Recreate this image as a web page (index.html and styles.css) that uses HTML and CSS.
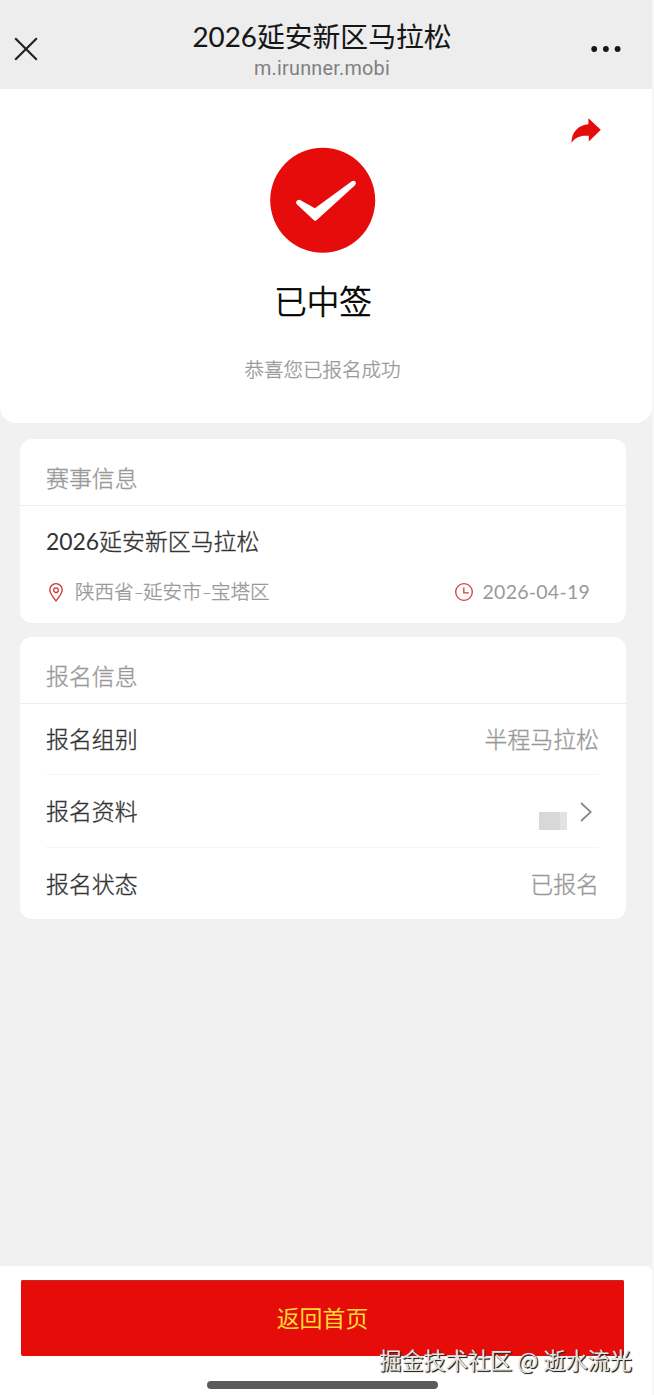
FILE: index.html
```html
<!DOCTYPE html>
<html lang="zh-CN">
<head>
<meta charset="utf-8">
<title>2026延安新区马拉松</title>
<link rel="stylesheet" href="styles.css">
</head>
<body>
<div class="screen">
  <header class="topbar">
    <svg class="close" viewBox="0 0 24 24"><path d="M1.2 1.2 22.8 22.8M22.8 1.2 1.2 22.8"/></svg>
    <div class="heading">
      <h1 class="title">2026延安新区马拉松</h1>
      <div class="domain">m.irunner.mobi</div>
    </div>
    <svg class="more" viewBox="0 0 30 8"><circle cx="3.2" cy="4" r="2.9"/><circle cx="14.9" cy="4" r="2.9"/><circle cx="26.6" cy="4" r="2.9"/></svg>
  </header>

  <section class="result">
    <svg class="share" viewBox="0 0 30 26"><path d="M17.400 0.200 29.800 11.800 17.800 23.600V17.800C9.500 17.200 4.200 19 0.400 25 0.600 13.500 7.500 7 17.400 6.200Z"/></svg>
    <svg class="success" viewBox="0 0 106 106"><circle cx="52.700" cy="53.300" r="52.500"/><path d="M26.800 57.200Q25 54.800 27.600 53.200 29.200 52.200 31 53.400L44.900 61.300 81.800 34.300Q84 33 85.400 34.500 86.800 36.300 85 38.200L46.500 73.200Q45.200 74.200 43.900 73.200Z"/></svg>
    <h2 class="status">已中签</h2>
    <p class="message">恭喜您已报名成功</p>
  </section>

  <main class="cards">
    <section class="card event">
      <h3 class="card-title">赛事信息</h3>
      <div class="event-body">
        <div class="event-name"><span class="year">2026</span>延安新区马拉松</div>
        <div class="meta">
          <svg class="pin" viewBox="0 0 14 19"><path d="M7 17.900C4.600 14.700.8 10.300.8 6.900a6.200 6.200 0 0 1 12.400 0C13.200 10.300 9.400 14.700 7 17.900Z"/><circle cx="7" cy="7.200" r="2.300"/></svg>
          <span class="place">陕西省<span class="dash">-</span>延安市<span class="dash">-</span>宝塔区</span>
          <svg class="clock" viewBox="0 0 18 18"><circle cx="9" cy="9" r="8.300"/><path d="M8.800 4.500V9.900H13.800"/></svg>
          <span class="date">2026-04-19</span>
        </div>
      </div>
    </section>

    <section class="card">
      <h3 class="card-title">报名信息</h3>
      <div class="rows">
        <div class="row"><span>报名组别</span><span class="value">半程马拉松</span></div>
        <div class="row"><span>报名资料</span><span class="detail"><i class="mask"></i><svg class="chevron" viewBox="0 0 12 20"><path d="M1 1 10.800 10 1 19"/></svg></span></div>
        <div class="row"><span>报名状态</span><span class="value">已报名</span></div>
      </div>
    </section>
  </main>

  <footer class="footer">
    <button class="home">返回首页</button>
    <div class="indicator"></div>
    <div class="watermark">掘金技术社区 @ 逝水流光</div>
  </footer>
</div>
</body>
</html>
```

FILE: styles.css
```css
* { box-sizing: border-box; }

body {
  margin: 0;
  background: #f7f7f7;
  font-family: Lato, "Noto Sans CJK SC", sans-serif;
  color: #333;
}

h1, h2, h3, p { margin: 0; font-weight: 400; }
svg { display: block; fill: none; flex: none; }

.screen {
  display: flex;
  flex-direction: column;
  width: 652px;
  height: 1395px;
  background: #f1f1f1;
}

.topbar {
  display: flex;
  align-items: center;
  height: 89px;
  padding: 9px 31px 0 14px;
  background: #ededed;
}
.close { width: 24px; height: 24px; stroke: #222; stroke-width: 2.2; }
.heading { flex: 1; padding: 5px 0 0 15px; text-align: center; }
.title {
  color: #161616;
  font-size: 27.800px;
  line-height: 36px;
  white-space: nowrap;
  -webkit-text-stroke: 0.1px #161616;
}
.domain {
  margin-top: 0;
  padding-bottom: 1px;
  color: #808080;
  font-family: Roboto, sans-serif;
  font-size: 19.800px;
  line-height: 28px;
  letter-spacing: 0.250px;
}
.more { width: 30px; height: 8px; fill: #161616; }

.result {
  display: flex;
  flex-direction: column;
  align-items: center;
  height: 334px;
  padding: 29px 7px 0 0;
  border-radius: 0 0 16px 16px;
  background: #fff;
}
.share { width: 30px; height: 26px; margin-right: 44px; align-self: flex-end; fill: #e60b0b; }
.success { width: 106px; height: 106px; margin-top: 3px; }
.success circle { fill: #e70c0c; }
.success path { fill: #fff; }

/* Light weight with a hairline stroke, halfway to regular */
.status,
.message,
.card-title,
.event-name,
.place,
.row {
  font-weight: 300;
  -webkit-text-stroke: 0.350px currentColor;
}
.status { margin: 27px 0 0 1px; color: #000; font-size: 32.500px; line-height: 44px; -webkit-text-stroke-width: 0.700px; }
.message { margin-top: 31px; color: #999; font-size: 19.500px; line-height: 30px; }

.cards {
  display: flex;
  flex-direction: column;
  gap: 14px;
  padding: 16px 26px 0 20px;
}
.card { border-radius: 12px; background: #fff; }
.card-title {
  height: 67px;
  padding: 22px 26px 0;
  border-bottom: 1px solid #ececec;
  color: #999;
  font-size: 22.900px;
  line-height: 34px;
}
.event { height: 184px; }
.event-body { padding: 18px 36px 0 26px; }
.event-name { font-size: 22.900px; line-height: 34px; }
.year { font-weight: 400; -webkit-text-stroke-width: 0; }
.meta {
  display: flex;
  align-items: center;
  margin-top: 19px;
  color: #999;
  font-size: 19.500px;
  line-height: 30px;
}
.pin { width: 14px; height: 19px; margin: 0 12px 0 3px; stroke: #c83737; stroke-width: 1.300; }
.dash { display: inline-block; width: 9.500px; text-align: center; transform: scaleX(1.350); }
.clock { width: 18px; height: 18px; margin: 0 10px 0 auto; stroke: #cf3b43; stroke-width: 1.300; }
.date { letter-spacing: 0.250px; }

.rows { padding: 0 27px 0 26px; }
.row {
  display: flex;
  align-items: center;
  justify-content: space-between;
  height: 73px;
  border-bottom: 1px solid #f5f5f5;
  font-size: 22.900px;
  line-height: 34px;
}
.row:first-child { height: 71px; }
.row:last-child { height: 71px; border-bottom: 0; }
.value { color: #999; -webkit-text-stroke-color: #999; }
.detail { display: flex; align-items: center; gap: 13px; padding-right: 7px; }
.mask { width: 28px; height: 18px; margin-top: 20px; background: linear-gradient(90deg, #d8d8d8 75%, #e3e3e3 75%); }
.chevron { width: 12px; height: 20px; margin-top: 1px; stroke: #888; stroke-width: 1.800; }

.footer {
  position: relative;
  display: flex;
  flex-direction: column;
  align-items: center;
  height: 129px;
  margin-top: auto;
  padding: 14px 28px 0 21px;
  border-radius: 0 6px 0 0;
  background: #fff;
}
.home {
  width: 100%;
  height: 76px;
  padding: 0;
  border: 0;
  border-radius: 2px;
  background: #e60c09;
  box-shadow: inset 0 1px #c42a28;
  color: #ffdc35;
  font: 22.900px/34px Lato, "Noto Sans CJK SC", sans-serif;
}
.indicator { width: 231px; height: 8px; margin-top: 25px; border-radius: 4px; background: #5b5b5b; }
.watermark {
  position: absolute;
  top: 77px;
  right: 20px;
  color: #e4e4e4;
  font-family: "Noto Sans CJK SC", sans-serif;
  font-size: 22.200px;
  line-height: 32px;
  white-space: nowrap;
  text-shadow: 1px 1px 1px #222, 1px 1px 0 #555;
}
```
